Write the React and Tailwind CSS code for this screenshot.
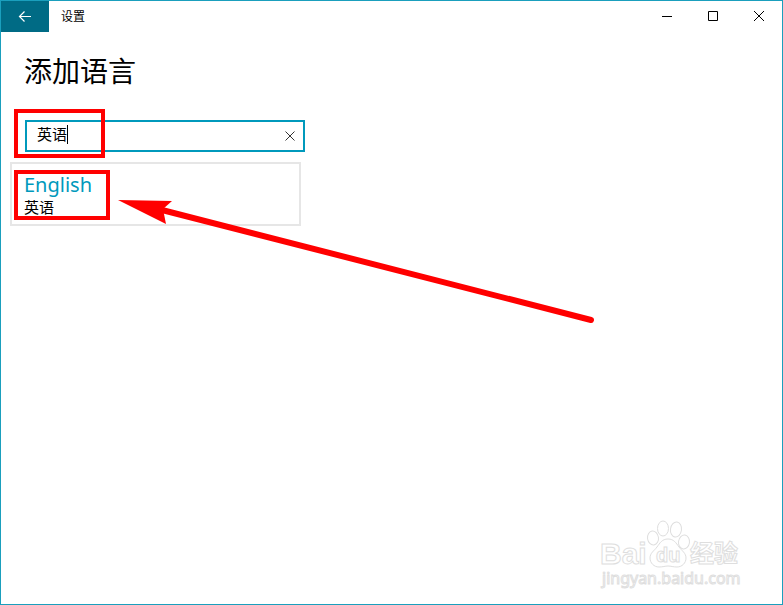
import React, { useState } from 'react';

const WindowButton = ({ label, children }) => (
  <button type="button" aria-label={label} className="flex h-full w-[46px] items-center justify-center">
    <svg width="12" height="12" viewBox="0 0 12 12" fill="none" stroke="#000">
      {children}
    </svg>
  </button>
);

const TitleBar = () => (
  <header className="flex h-[31px]">
    <button type="button" aria-label="返回" className="flex h-full w-12 items-center justify-center bg-[#006b85]">
      <svg width="14" height="12" viewBox="0 0 14 12" fill="none" stroke="#fff" strokeWidth="1.2">
        <path d="M1.5 5.5H13M6.5 .5l-5 5 5 5" />
      </svg>
    </button>
    <span className="ml-3 flex-1 text-xs leading-8">设置</span>
    <div className="flex h-[30px]">
      <WindowButton label="最小化">
        <path d="M1 6.5h10" />
      </WindowButton>
      <WindowButton label="最大化">
        <path d="M1.5 1.5h9v9h-9z" />
      </WindowButton>
      <WindowButton label="关闭">
        <path d="M1 1l10 10M11 1L1 11" />
      </WindowButton>
    </div>
  </header>
);

const SearchBox = () => {
  const [query, setQuery] = useState('英语');

  return (
    <div className="relative ml-6 flex h-8 w-[280px] items-center border-2 border-[#0099bc]">
      <input
        type="text"
        aria-label="搜索语言"
        value={query}
        onChange={(e) => setQuery(e.target.value)}
        className="h-full min-w-0 flex-1 pb-[6px] pl-[10px] text-[15px] caret-transparent outline-none"
      />
      <button
        type="button"
        aria-label="清除"
        onClick={() => setQuery('')}
        className="flex h-full w-[26px] items-center justify-center"
      >
        <svg width="10" height="10" viewBox="0 0 10 10" fill="none" stroke="#333">
          <path d="M.5.5l9 9M9.5.5l-9 9" />
        </svg>
      </button>
      {/* Cursor */}
      <span className="absolute top-[3px] left-10 h-[19px] w-px bg-black" />
      {/* Highlight */}
      <span className="pointer-events-none absolute -top-[13px] -left-[13px] h-[49px] w-[91px] border-4 border-[#ff0000]" />
    </div>
  );
};

const ResultItem = ({ name, localName }) => (
  <button type="button" className="relative block h-16 w-full border-2 border-[#e6e6e6] pt-[2px] pl-3 text-left">
    <span className="block text-xl leading-6 text-[#0099bc]">{name}</span>
    <span className="block text-[15px] leading-5">{localName}</span>
    <span className="pointer-events-none absolute top-[6px] left-[2px] h-[50px] w-24 border-4 border-[#ff0000]" />
  </button>
);

const Arrow = () => (
  <svg
    className="pointer-events-none absolute top-[190px] left-[110px]"
    width="490"
    height="140"
    viewBox="111 191 490 140"
    aria-hidden="true"
  >
    <path d="M162 210L591 320" stroke="#ff0000" strokeWidth="6" strokeLinecap="round" />
    <path d="M118 200L172 201L163 209L166 224z" fill="#ff0000" />
  </svg>
);

const Watermark = () => (
  <svg
    className="pointer-events-none absolute right-9 bottom-3"
    width="150"
    height="76"
    viewBox="0 0 150 76"
    fill="#fff"
    stroke="#dedede"
    strokeWidth="1"
  >
    <text x="4" y="48" fontSize="30" fontWeight="700" fontFamily="'Liberation Sans', sans-serif">Bai</text>
    {/* Paw */}
    <ellipse cx="57" cy="22" rx="5.5" ry="7" transform="rotate(-8 57 22)" />
    <ellipse cx="67" cy="12.5" rx="5.5" ry="7.5" />
    <ellipse cx="80" cy="13.5" rx="5.5" ry="7.5" transform="rotate(8 80 13.5)" />
    <ellipse cx="88" cy="26" rx="5.5" ry="7" transform="rotate(8 88 26)" />
    <path d="M72 23c-6 0-8 4-11 8-3 4-7 6-7 11 0 5 4 9 9 9 4 0 6-1 9-1s5 1 9 1c5 0 9-4 9-9s-4-7-7-11c-3-4-5-8-11-8z" />
    <text x="60" y="46" fontSize="20" fontWeight="700" fontFamily="'Liberation Sans', sans-serif">du</text>
    <text x="94" y="46" fontSize="24" fontWeight="700" fontFamily="'Noto Sans CJK SC', sans-serif">经验</text>
    <text x="6" y="68" fontSize="16" fontFamily="'Noto Sans', sans-serif">jingyan.baidu.com</text>
  </svg>
);

export default function App() {
  return (
    <div className="relative min-h-screen overflow-hidden border border-[#1a9fbd] bg-white font-['Noto_Sans','Noto_Sans_CJK_SC',sans-serif] text-black">
      <TitleBar />
      <main>
        <h1 className="mt-[19px] mb-[29px] ml-[23px] text-[28px] leading-10">添加语言</h1>
        <SearchBox />
        <div className="mt-[10px] ml-[9px] w-[291px]">
          <ResultItem name="English" localName="英语" />
        </div>
      </main>
      <Arrow />
      <Watermark />
    </div>
  );
}
